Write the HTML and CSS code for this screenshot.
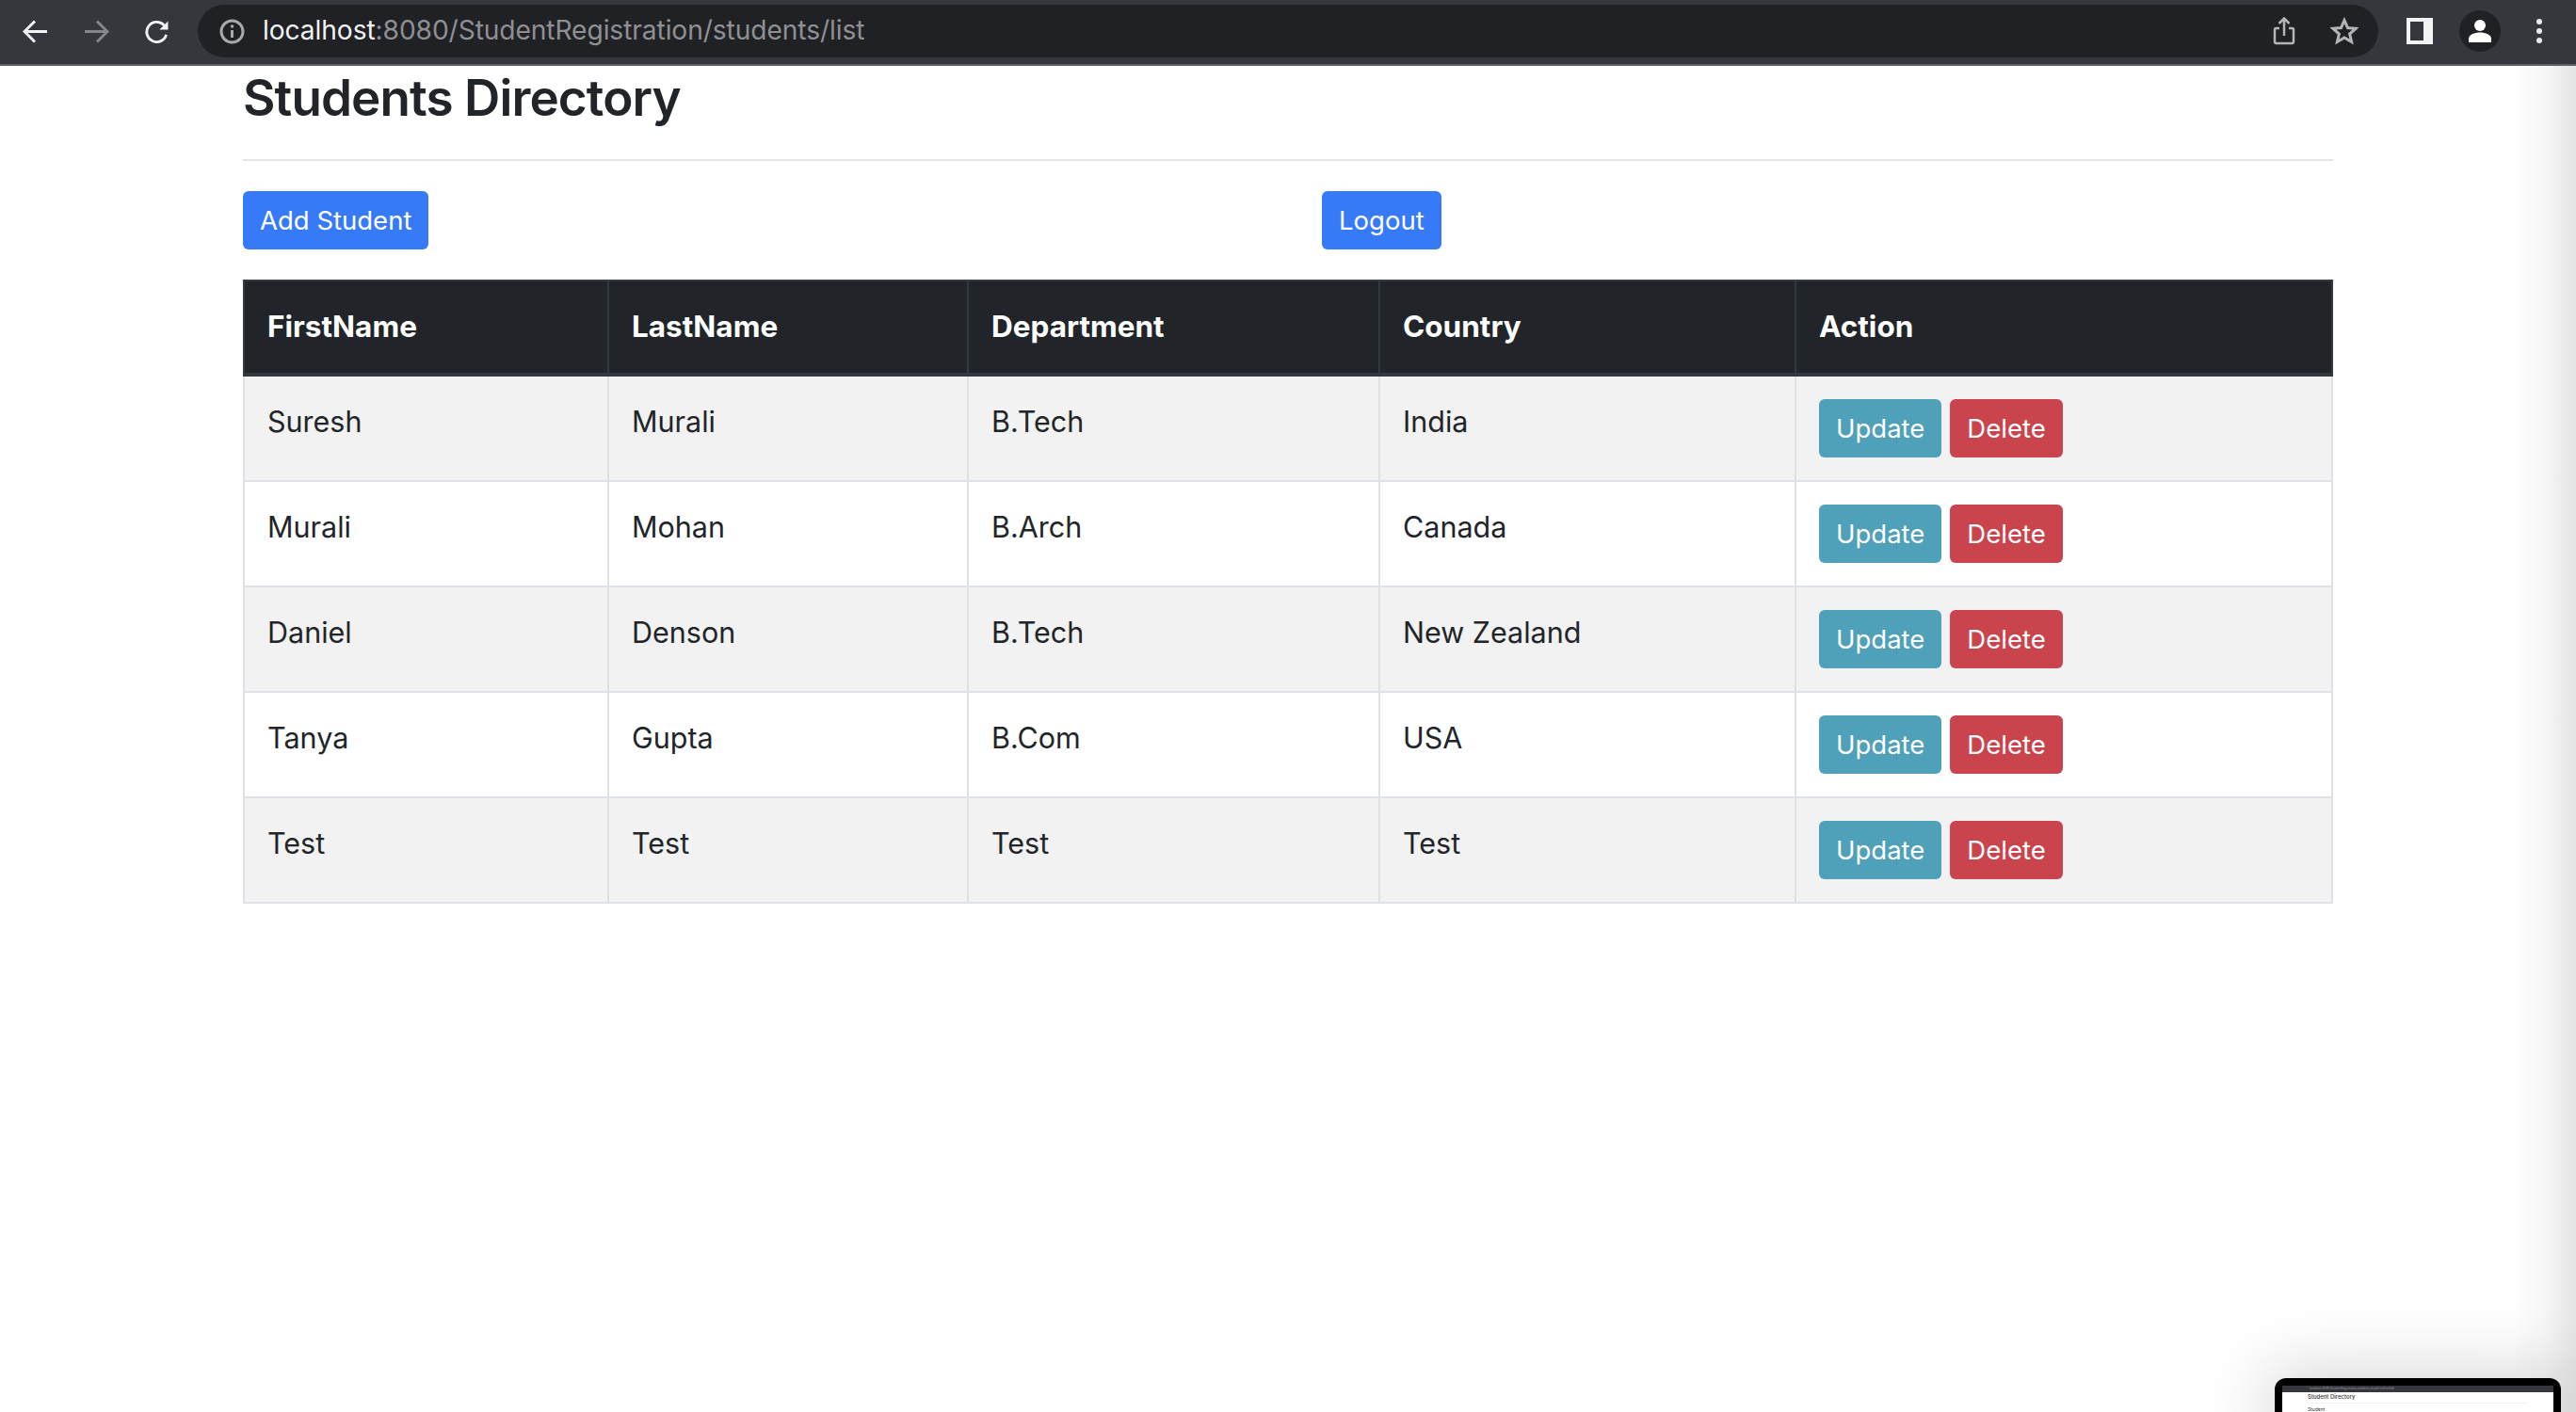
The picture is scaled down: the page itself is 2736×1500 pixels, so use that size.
FILE: index.html
```html
<!DOCTYPE html>
<html lang="en">
<head>
<meta charset="utf-8">
<title>Students Directory</title>
<link rel="stylesheet" href="styles.css">
</head>
<body>
<header class="chrome">
  <svg class="nav-icon back" viewBox="0 0 27 24"><path d="M26 12H2M13 1 2 12l11 11"/></svg>
  <svg class="nav-icon forward" viewBox="0 0 27 24"><path d="M1 12h24M14 1l11 11-11 11"/></svg>
  <svg class="nav-icon reload" viewBox="0 0 28 26"><path d="M24.5 16.5A11 11 0 1 1 21.5 5.5L25 9"/><path class="fill" d="M26.5 1.5v9.500h-9.500z"/></svg>
  <div class="omnibox">
    <svg class="info" viewBox="0 0 27 27"><circle cx="13.500" cy="13.500" r="11.500"/><path d="M13.500 12v8"/><circle class="dot" cx="13.500" cy="8" r="1.800"/></svg>
    <span class="url"><span class="host">localhost</span>:8080/StudentRegistration/students/list</span>
    <svg class="share" viewBox="0 0 24 30"><path d="M7 12H3.500A1.500 1.500 0 0 0 2 13.500v13A1.500 1.500 0 0 0 3.500 28h17a1.500 1.500 0 0 0 1.500-1.500v-13a1.500 1.500 0 0 0-1.500-1.500H17M12 20V2M6.500 7 12 1.500 17.500 7"/></svg>
    <svg class="star" viewBox="0 0 30 30"><path d="M15 3.500l3.500 8 8.600.8-6.500 5.700 2 8.500L15 22l-7.600 4.500 2-8.500-6.500-5.700 8.600-.8z"/></svg>
  </div>
  <svg class="panel" viewBox="0 0 28 28"><path fill-rule="evenodd" d="M0 0h28v28H0zM4 4v20h14V4z"/></svg>
  <div class="avatar">
    <svg viewBox="0 0 26 26"><circle cx="13" cy="7" r="6"/><path d="M1 25v-4c0-4 6-6.500 12-6.500S25 17 25 21v4z"/></svg>
  </div>
  <div class="menu"><i></i><i></i><i></i></div>
</header>

<main class="container">
  <h1 class="title">Students Directory</h1>
  <hr class="rule">
  <div class="toolbar">
    <a class="btn btn-primary">Add Student</a>
    <a class="btn btn-primary">Logout</a>
  </div>
  <table class="students">
    <colgroup>
      <col class="c1"><col class="c2"><col class="c3"><col class="c4"><col class="c5">
    </colgroup>
    <thead>
      <tr><th>FirstName</th><th>LastName</th><th>Department</th><th>Country</th><th>Action</th></tr>
    </thead>
    <tbody>
      <tr><td>Suresh</td><td>Murali</td><td>B.Tech</td><td>India</td><td><div class="actions"><a class="btn btn-info">Update</a><a class="btn btn-danger">Delete</a></div></td></tr>
      <tr><td>Murali</td><td>Mohan</td><td>B.Arch</td><td>Canada</td><td><div class="actions"><a class="btn btn-info">Update</a><a class="btn btn-danger">Delete</a></div></td></tr>
      <tr><td>Daniel</td><td>Denson</td><td>B.Tech</td><td>New Zealand</td><td><div class="actions"><a class="btn btn-info">Update</a><a class="btn btn-danger">Delete</a></div></td></tr>
      <tr><td>Tanya</td><td>Gupta</td><td>B.Com</td><td>USA</td><td><div class="actions"><a class="btn btn-info">Update</a><a class="btn btn-danger">Delete</a></div></td></tr>
      <tr><td>Test</td><td>Test</td><td>Test</td><td>Test</td><td><div class="actions"><a class="btn btn-info">Update</a><a class="btn btn-danger">Delete</a></div></td></tr>
    </tbody>
  </table>
</main>

<div class="edge-shadow"></div>
<aside class="thumb">
  <div class="thumb-screen">
    <div class="thumb-bar">localhost:8080/StudentRegistration/students/showFormForAdd</div>
    <div class="thumb-title">Student Directory</div>
    <div class="thumb-rule"></div>
    <div class="thumb-sub">Student</div>
  </div>
</aside>
</body>
</html>
```

FILE: styles.css
```css
* { box-sizing: border-box; }
html, body { margin: 0; height: 1500px; overflow: hidden; }
body { background: #fff; color: #212529; font-family: Inter, "Liberation Sans", sans-serif; position: relative; }

.chrome { height: 70px; background: #36373c; border-bottom: 2px solid #5f6065; display: flex; align-items: center; padding: 0 0 2px 24px; }
.chrome svg { display: block; }
.nav-icon { fill: none; stroke: #f1f3f4; stroke-width: 3; width: 27px; height: 25px; }
.nav-icon .fill { fill: #f1f3f4; stroke: none; }
.forward { stroke: #85868a; margin-left: 38px; }
.reload { margin-left: 37px; }
.omnibox { width: 2316px; height: 56px; margin-left: 30px; background: #202124; border-radius: 28px; display: flex; align-items: center; padding-left: 23px; }
.info { width: 27px; height: 27px; fill: none; stroke: #a8a9ac; stroke-width: 3; }
.info .dot { fill: #a8a9ac; stroke: none; }
.url { margin: -2px 0 0 19px; font-size: 28.2px; color: #8f9094; white-space: nowrap; letter-spacing: -.1px; flex: 1; }
.host { color: #f1f3f4; }
.share { width: 24px; height: 30px; fill: none; stroke: #b4b5b8; stroke-width: 2.500; }
.star { width: 30px; height: 30px; margin: 0 21px 0 37px; fill: none; stroke: #b4b5b8; stroke-width: 3; }
.panel { width: 28px; height: 28px; margin-left: 30px; fill: #f1f3f4; }
.avatar { width: 44px; height: 44px; margin-left: 28px; border-radius: 50%; background: #202124; display: flex; align-items: center; justify-content: center; }
.avatar svg { width: 26px; height: 26px; fill: #fff; }
.menu { margin-left: 38px; display: flex; flex-direction: column; gap: 4px; }
.menu i { width: 6px; height: 6px; border-radius: 50%; background: #e8eaed; display: block; }

.container { width: 2220px; margin: 0 auto; }
.title { margin: 0; font-size: 53px; line-height: 62px; font-weight: 600; letter-spacing: -.9px; height: 99px; padding-top: 3px; }
.rule { margin: 0; border: 0; height: 2px; background: #e4e5e6; }
.toolbar { display: grid; grid-template-columns: 1146px auto; justify-items: start; margin-top: 32px; }
.btn { display: block; height: 62px; line-height: 63px; padding: 0 18px; font-size: 27.5px; color: #fff; border-radius: 6px; white-space: nowrap; }
.btn-primary { background: #377af7; }
.btn-info { background: #4ea1b8; }
.btn-danger { background: #ca444d; }

.students { width: 2218px; margin-top: 32px; border-collapse: collapse; table-layout: fixed; font-size: 30.500px; }
.c1 { width: 387px; } .c2 { width: 382px; } .c3 { width: 437px; } .c4 { width: 442px; } .c5 { width: 570px; }
.students th { background: #212529; color: #fff; border: 2px solid #32383e; border-bottom-width: 4px; height: 100px; padding: 0 24px 2px; text-align: left; font-weight: 700; font-size: 31.500px; }
.students td { border: 2px solid #dee2e6; height: 112px; padding: 24px; vertical-align: top; line-height: 48px; }
.students tbody tr:nth-child(odd) td { background: #f2f2f2; }
.actions { display: flex; gap: 9px; }

.edge-shadow { position: absolute; top: 70px; right: 0; bottom: 0; width: 70px; background: linear-gradient(to right, rgba(228,228,228,0), rgba(228,228,228,.3) 50%, #e4e4e4); }
.thumb { position: absolute; left: 2416px; top: 1464px; width: 304px; height: 60px; background: #000; border-radius: 12px 12px 0 0; padding: 8px 8px 0; box-shadow: 0 0 70px 10px rgba(0,0,0,.16); }
.thumb-screen { background: #fff; height: 52px; font-size: 6px; overflow: hidden; }
.thumb-bar { height: 7px; background: #36373c; color: #999; font-size: 3px; line-height: 7px; padding-left: 29px; white-space: nowrap; }
.thumb-title { margin: 1px 0 0 27px; font-size: 6px; line-height: 8px; font-weight: 500; color: #333; }
.thumb-rule { height: 1px; margin: 2px 27px 0; background: #f0f0f0; }
.thumb-sub { margin: 3px 0 0 27px; font-size: 5px; line-height: 7px; color: #333; }
```
